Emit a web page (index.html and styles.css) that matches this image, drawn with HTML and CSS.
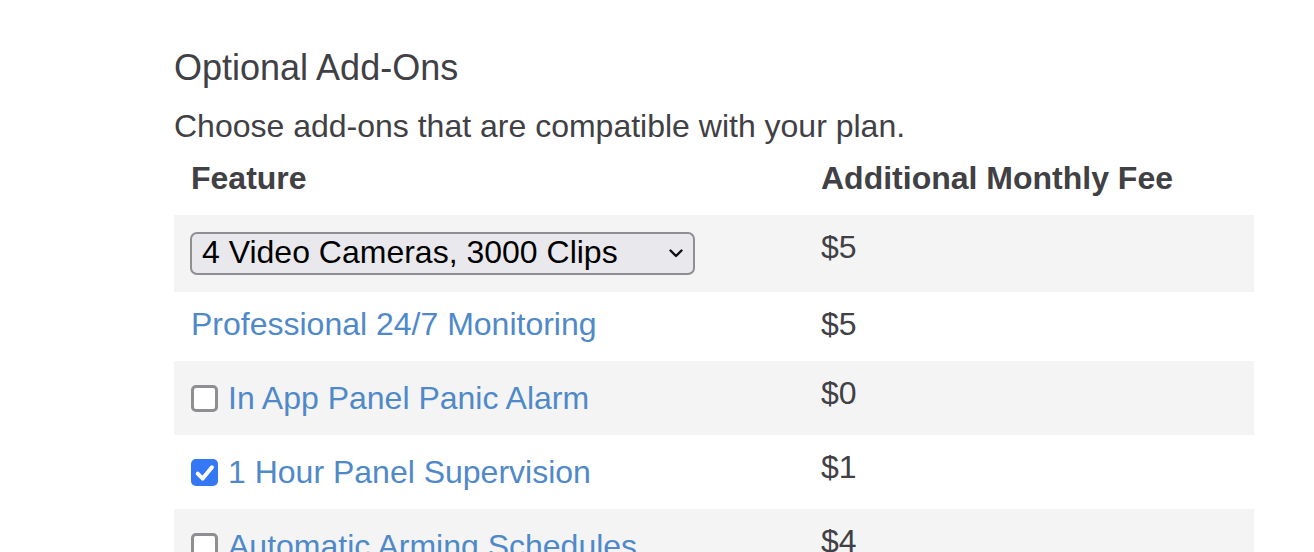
FILE: index.html
```html
<!DOCTYPE html>
<html>
<head>
<meta charset="utf-8">
<link rel="stylesheet" href="styles.css">
</head>
<body>
<div class="page">
  <h2 class="title">Optional Add-Ons</h2>
  <p class="subtitle">Choose add-ons that are compatible with your plan.</p>
  <table class="addons">
    <thead>
      <tr><th class="feat">Feature</th><th class="fee">Additional Monthly Fee</th></tr>
    </thead>
    <tbody>
      <tr class="alt">
        <td class="feat sel"><div class="select"><span class="opt">4 Video Cameras, 3000 Clips</span><svg class="chev" viewBox="0 0 14 9" width="14" height="9"><path d="M1.5 1.5 L7 7 L12.5 1.5" fill="none" stroke="#111" stroke-width="2.4" stroke-linecap="round" stroke-linejoin="round"/></svg></div></td>
        <td class="fee">$5</td>
      </tr>
      <tr>
        <td class="feat"><a class="link">Professional 24/7 Monitoring</a></td>
        <td class="fee">$5</td>
      </tr>
      <tr class="alt">
        <td class="feat chk"><span class="box"></span><a class="link">In App Panel Panic Alarm</a></td>
        <td class="fee">$0</td>
      </tr>
      <tr>
        <td class="feat chk"><span class="box checked"><svg viewBox="0 0 24 24" width="27" height="27"><path d="M6 13 L10.4 17.4 L18.6 7.4" fill="none" stroke="#fff" stroke-width="3.6" stroke-linecap="round" stroke-linejoin="round"/></svg></span><a class="link">1 Hour Panel Supervision</a></td>
        <td class="fee">$1</td>
      </tr>
      <tr class="alt">
        <td class="feat chk"><span class="box"></span><a class="link">Automatic Arming Schedules</a></td>
        <td class="fee">$4</td>
      </tr>
    </tbody>
  </table>
</div>
</body>
</html>
```
FILE: styles.css
```css
html, body { margin: 0; padding: 0; background: #fff; }
body { font-family: "Liberation Sans", Arial, sans-serif; color: #404045; }
.page { padding: 47px 0 0 174px; width: 1080px; }
.title { font-size: 36px; font-weight: normal; margin: 0 0 19px 0; line-height: 42px; }
.subtitle { font-size: 32px; margin: 0 0 8px 0; line-height: 37px; }
.addons { border-collapse: collapse; width: 1080px; font-size: 32px; }
.addons th { text-align: left; font-weight: bold; padding: 7px 17px 18px; line-height: 37px; }
.addons td { vertical-align: top; padding: 14px 17px 18px; line-height: 37px; }
.addons td.sel { padding: 17px 17px 17px 16px; }
.addons td.chk { padding-top: 19px; }
th.feat, td.feat { width: 596px; }
tr.alt td { background: #f4f4f4; }
.link { color: #4f89c9; }
td.feat { white-space: nowrap; }
.select { display: flex; align-items: center; justify-content: space-between; box-sizing: border-box; width: 505px; height: 43px; border: 2px solid #8e8e93; border-radius: 7px; background: #e9e9ed; color: #000; padding: 0 10px 0 10px; font-size: 32px; line-height: 38px; }
.opt { margin-bottom: 4px; }
.chev { flex: none; }
.box { display: inline-block; box-sizing: border-box; width: 27px; height: 27px; border: 3.5px solid #8e8e93; border-radius: 5px; background: #fff; vertical-align: -3px; margin-right: 10px; }
.box.checked { background: #3478f6; border: none; }
.box.checked svg { display: block; }
```
